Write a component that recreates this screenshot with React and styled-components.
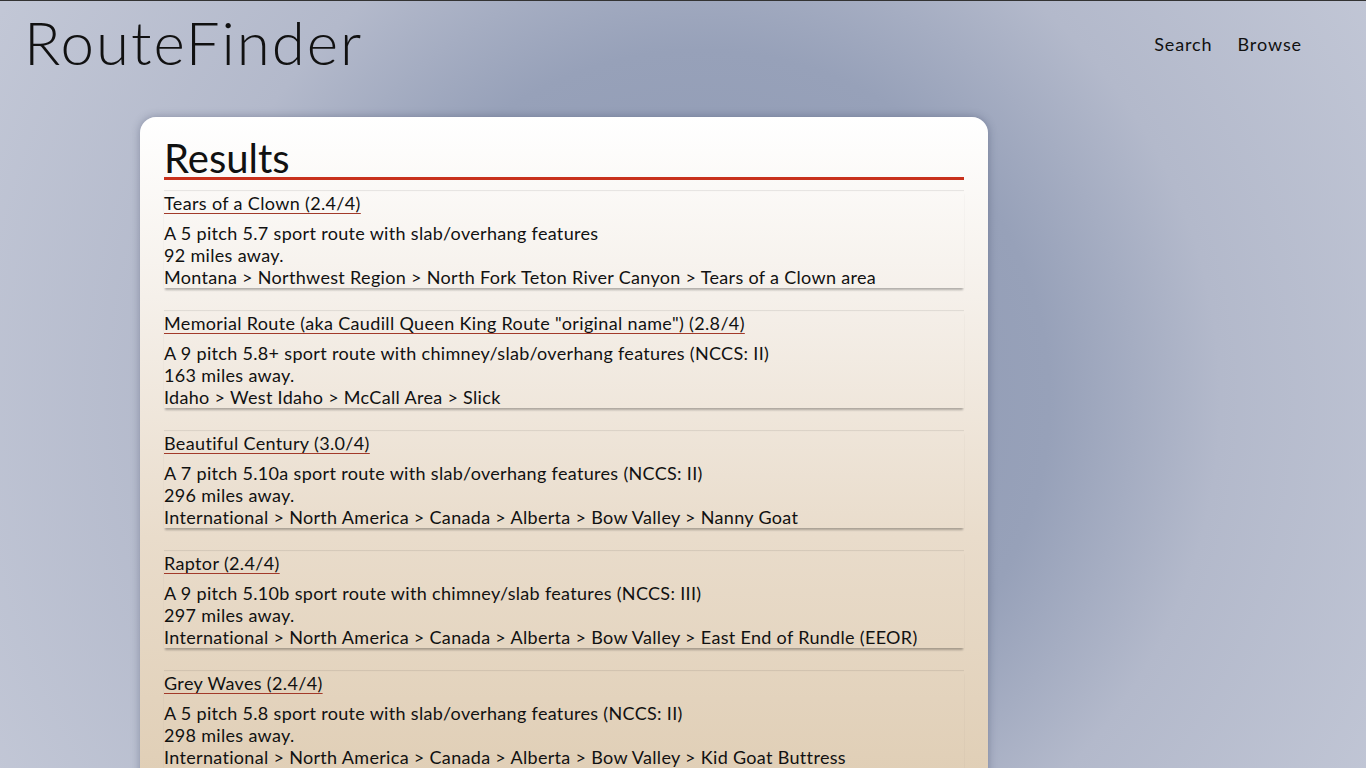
import styled, { createGlobalStyle } from 'styled-components';

const GlobalStyle = createGlobalStyle`
	html, body {
		margin: 0;
		padding: 0;
	}
	body {
		font-family: Lato, "Open Sans", sans-serif;
		color: #111;
		min-height: 100vh;
		background: radial-gradient(circle at 700px 400px, #8b96b1 0, #97a1b9 350px, #b3b9cb 520px, #c2c7d6 800px);
		background-attachment: fixed;
		border-top: 1px solid #333;
	}
`;

const Header = styled.header`
	display: flex;
	align-items: center;
	justify-content: space-between;
	padding: 0 64px 0 24px;
	height: 84px;
	box-sizing: border-box;
`;

const Logo = styled.h1`
	margin: -2px 0 0;
	font-size: 60px;
	font-weight: 300;
	letter-spacing: 2px;
`;

const Nav = styled.nav`
	display: flex;
	gap: 25px;
	margin-top: 2px;
`;

const NavLink = styled.a`
	font-size: 18px;
	letter-spacing: 0.9px;
	color: #111;
	text-decoration: none;
	cursor: pointer;
`;

const Card = styled.main`
	width: 848px;
	box-sizing: border-box;
	margin: 32px 0 0 140px;
	padding: 22px 24px 130px;
	border-radius: 16px;
	background: linear-gradient(to bottom, #ffffff 0, #f5f0ea 180px, #e9dccb 420px, #dbc7aa 800px);
	box-shadow: 0 0 8px rgba(40, 50, 80, 0.35);
`;

const Title = styled.h2`
	margin: 0 0 10px;
	font-size: 40px;
	font-weight: 400;
	line-height: 38px;
	border-bottom: 3px solid #c8311c;
`;

const ResultList = styled.div`
	display: flex;
	flex-direction: column;
	gap: 22px;
`;

const Result = styled.div`
	padding-top: 2px;
	box-shadow: inset 0 2px 1px -1px rgba(0, 0, 0, 0.09), 0 3px 2px -1px rgba(0, 0, 0, 0.28);
`;

const RouteLink = styled.a`
	display: inline-block;
	font-size: 18px;
	line-height: 22px;
	letter-spacing: 0.35px;
	color: #111;
	text-decoration: underline;
	text-decoration-color: #a23a2a;
	text-underline-offset: 3px;
	cursor: pointer;
`;

const Details = styled.p`
	margin: 8px 0 0;
	font-size: 18px;
	line-height: 22px;
	letter-spacing: 0.32px;
`;

const results = [
	{
		name: 'Tears of a Clown (2.4/4)',
		desc: 'A 5 pitch 5.7 sport route with slab/overhang features',
		dist: '92 miles away.',
		path: 'Montana > Northwest Region > North Fork Teton River Canyon > Tears of a Clown area',
	},
	{
		name: 'Memorial Route (aka Caudill Queen King Route "original name") (2.8/4)',
		desc: 'A 9 pitch 5.8+ sport route with chimney/slab/overhang features (NCCS: II)',
		dist: '163 miles away.',
		path: 'Idaho > West Idaho > McCall Area > Slick',
	},
	{
		name: 'Beautiful Century (3.0/4)',
		desc: 'A 7 pitch 5.10a sport route with slab/overhang features (NCCS: II)',
		dist: '296 miles away.',
		path: 'International > North America > Canada > Alberta > Bow Valley > Nanny Goat',
	},
	{
		name: 'Raptor (2.4/4)',
		desc: 'A 9 pitch 5.10b sport route with chimney/slab features (NCCS: III)',
		dist: '297 miles away.',
		path: 'International > North America > Canada > Alberta > Bow Valley > East End of Rundle (EEOR)',
	},
	{
		name: 'Grey Waves (2.4/4)',
		desc: 'A 5 pitch 5.8 sport route with slab/overhang features (NCCS: II)',
		dist: '298 miles away.',
		path: 'International > North America > Canada > Alberta > Bow Valley > Kid Goat Buttress',
	},
];

const App = () => (
	<>
		<GlobalStyle />
		<Header>
			<Logo>RouteFinder</Logo>
			<Nav>
				<NavLink>Search</NavLink>
				<NavLink>Browse</NavLink>
			</Nav>
		</Header>
		<Card>
			<Title>Results</Title>
			<ResultList>
				{results.map((r) => (
					<Result key={r.name}>
						<RouteLink>{r.name}</RouteLink>
						<Details>
							{r.desc}
							<br />
							{r.dist}
							<br />
							{r.path}
						</Details>
					</Result>
				))}
			</ResultList>
		</Card>
	</>
);

export default App;
